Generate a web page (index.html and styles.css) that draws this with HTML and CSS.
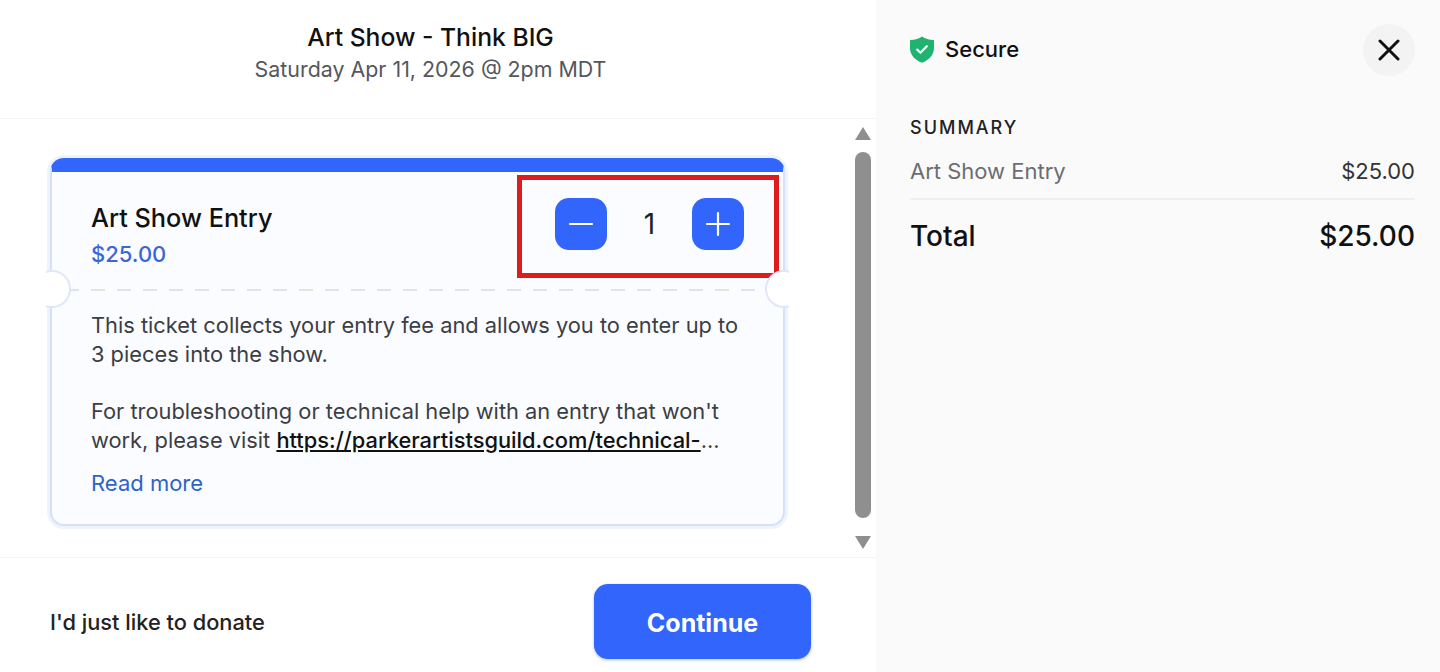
FILE: index.html
```html
<!DOCTYPE html>
<html lang="en">
  <head>
    <meta charset="UTF-8" />
    <meta name="viewport" content="width=device-width, initial-scale=1.0" />
    <title>Checkout</title>
    <link rel="stylesheet" href="styles.css">
  </head>
  <body>
    <div class="checkout">
      <main class="main">
        <header class="event-header">
          <h1>Art Show - Think BIG</h1>
          <p>Saturday Apr 11, 2026 @ 2pm MDT</p>
        </header>

        <section class="tickets">
          <div class="ticket-list">
            <div class="ticket">
              <div class="ticket-top">
                <div>
                  <h2>Art Show Entry</h2>
                  <div class="ticket-price">$25.00</div>
                </div>
                <div class="stepper">
                  <button class="step-btn" aria-label="Decrease">
                    <svg width="26" height="26" viewBox="0 0 26 26"><path d="M2 13h22" stroke="#fff" stroke-width="2.2" stroke-linecap="round"/></svg>
                  </button>
                  <span class="step-count">1</span>
                  <button class="step-btn" aria-label="Increase">
                    <svg width="26" height="26" viewBox="0 0 26 26"><path d="M2 13h22M13 2v22" stroke="#fff" stroke-width="2.2" stroke-linecap="round"/></svg>
                  </button>
                </div>
              </div>
              <div class="ticket-divider"></div>
              <div class="ticket-body">
                <p>This ticket collects your entry fee and allows you to enter up to<br>3 pieces into the show.</p>
                <p>For troubleshooting or technical help with an entry that won't<br>work, please visit <a href="#" class="ticket-link">https://parkerartistsguild.com/technical-</a>...</p>
                <a href="#" class="read-more">Read more</a>
              </div>
              <div class="highlight"></div>
            </div>
          </div>
          <div class="scrollbar">
            <span class="arrow-up"></span>
            <span class="thumb"></span>
            <span class="arrow-down"></span>
          </div>
        </section>

        <footer class="main-footer">
          <a href="#" class="donate">I'd just like to donate</a>
          <button class="continue-btn">Continue</button>
        </footer>
      </main>

      <aside class="sidebar">
        <div class="sidebar-top">
          <div class="secure">
            <svg width="24" height="27" viewBox="0 0 24 27">
              <path d="M12 0.5 C15 2.6 19 3.8 23.2 4 C23.8 4 24 4.4 24 5 L24 12 C24 19 19 24 12 26.8 C5 24 0 19 0 12 L0 5 C0 4.4 .2 4 .8 4 C5 3.8 9 2.6 12 0.5 Z" fill="#1fb36f"/>
              <path d="M7.2 13.6l3.3 3.2 6.3-6.6" fill="none" stroke="#fff" stroke-width="2.2" stroke-linecap="round" stroke-linejoin="round"/>
            </svg>
            <span>Secure</span>
          </div>
          <button class="close-btn" aria-label="Close">
            <svg width="22" height="22" viewBox="0 0 22 22"><path d="M2 2l18 18M20 2L2 20" stroke="#111" stroke-width="3" stroke-linecap="round"/></svg>
          </button>
        </div>

        <h3 class="summary-title">SUMMARY</h3>
        <div class="summary-row">
          <span class="summary-name">Art Show Entry</span>
          <span class="summary-price">$25.00</span>
        </div>
        <div class="summary-total">
          <span>Total</span>
          <span>$25.00</span>
        </div>
      </aside>
    </div>
  </body>
</html>
```

FILE: styles.css
```css
*,
*::before,
*::after {
  box-sizing: border-box;
}

html,
body {
  margin: 0;
  height: 100%;
  overflow: hidden;
}

body {
  font-family: Inter, "Noto Sans", sans-serif;
  color: #111;
  background-color: white;
}

.checkout {
  display: flex;
  height: 672px;
}

.main {
  width: 876px;
  display: flex;
  flex-direction: column;
}

.event-header {
  height: 119px;
  padding: 21px 15px 0 0;
  text-align: center;
  border-bottom: 1px solid #f4f4f4;
}

.event-header h1 {
  margin: 0;
  font-size: 24.7px;
  line-height: 32px;
  font-weight: 500;
}

.event-header p {
  margin: 1px 0 0;
  font-size: 21.4px;
  line-height: 30px;
  color: #55575c;
}

.tickets {
  height: 439px;
  display: flex;
  border-bottom: 1px solid #f4f4f4;
}

.ticket-list {
  width: 855px;
  padding: 39px 0 0 50px;
}

.ticket {
  position: relative;
  width: 735px;
  height: 368px;
  background-color: #fbfcff;
  border: 2px solid #d5e1f6;
  border-top: 14px solid #3265fb;
  border-radius: 14px;
  box-shadow: 0 0 0 3px #eef3fd;
}

.ticket::before,
.ticket::after {
  content: "";
  position: absolute;
  top: 98px;
  width: 38px;
  height: 38px;
  border-radius: 50%;
  background-color: white;
  border: 2px solid #dfe7f8;
}

.ticket::before {
  left: -19px;
  clip-path: inset(-1px -1px -1px 13px);
}

.ticket::after {
  right: -20px;
  clip-path: inset(-1px 14px -1px -1px);
}

.ticket-top {
  height: 117px;
  padding: 30px 39px 0 39px;
  display: flex;
  justify-content: space-between;
  align-items: flex-start;
}

.ticket-top h2 {
  margin: 0;
  font-size: 25.3px;
  line-height: 32px;
  font-weight: 500;
}

.ticket-price {
  margin-top: 5px;
  font-size: 22px;
  line-height: 30px;
  font-weight: 500;
  color: #3b66d8;
}

.stepper {
  display: flex;
  align-items: center;
  margin-top: -4px;
}

.step-btn {
  width: 52px;
  height: 52px;
  padding: 0;
  border: none;
  border-radius: 14px;
  background-color: #3265fb;
  display: flex;
  align-items: center;
  justify-content: center;
  cursor: pointer;
}

.step-count {
  width: 85px;
  text-align: center;
  font-size: 28px;
  color: #222;
}

.ticket-divider {
  height: 2px;
  margin: 0 13px;
  background: repeating-linear-gradient(to right, #e0e3ea 0 14px, transparent 14px 26px);
}

.ticket-body {
  padding: 20px 39px 0;
}

.ticket-body p {
  margin: 0 0 28px;
  font-size: 21.84px;
  line-height: 29px;
  color: #3b3e44;
}

.ticket-link {
  color: #111;
  font-weight: 500;
}

.read-more {
  display: block;
  margin-top: -15px;
  font-size: 22px;
  line-height: 30px;
  color: #2e63c9;
  text-decoration: none;
}

.highlight {
  position: absolute;
  left: 465px;
  top: 3px;
  width: 262px;
  height: 103px;
  border: 5px solid #dd1c1c;
}

.scrollbar {
  width: 16px;
  display: flex;
  flex-direction: column;
  align-items: center;
  padding-top: 8px;
}

.arrow-up {
  width: 0;
  height: 0;
  border-left: 8px solid transparent;
  border-right: 8px solid transparent;
  border-bottom: 13px solid #8f8f8f;
}

.thumb {
  width: 16px;
  height: 366px;
  margin: 12px 0 18px;
  border-radius: 8px;
  background-color: #8f8f8f;
}

.arrow-down {
  width: 0;
  height: 0;
  border-left: 8px solid transparent;
  border-right: 8px solid transparent;
  border-top: 13px solid #8f8f8f;
}

.main-footer {
  flex: 1;
  display: flex;
  align-items: center;
  justify-content: space-between;
  padding: 12px 65px 0 50px;
}

.donate {
  font-size: 21.8px;
  font-weight: 500;
  color: #222;
  text-decoration: none;
  margin-top: 2px;
}

.continue-btn {
  width: 217px;
  height: 75px;
  padding-top: 4px;
  border: none;
  border-radius: 14px;
  background-color: #3265fb;
  box-shadow: 0 1px 3px rgba(50, 101, 251, 0.4);
  color: white;
  font-family: inherit;
  font-size: 25px;
  font-weight: 700;
  cursor: pointer;
}

.sidebar {
  flex: 1;
  padding: 24px 25px 0 34px;
  background-color: #fafafa;
}

.sidebar-top {
  display: flex;
  justify-content: space-between;
  align-items: center;
}

.secure {
  display: flex;
  align-items: center;
  gap: 11px;
  margin-top: -2px;
  font-size: 22px;
  font-weight: 500;
}

.close-btn {
  width: 52px;
  height: 52px;
  padding: 0;
  border: none;
  border-radius: 50%;
  background-color: #f3f3f3;
  display: flex;
  align-items: center;
  justify-content: center;
  cursor: pointer;
}

.summary-title {
  margin: 39px 0 0;
  font-size: 18px;
  line-height: 26px;
  font-weight: 500;
  letter-spacing: 2px;
  color: #222;
}

.summary-row {
  display: flex;
  justify-content: space-between;
  align-items: center;
  height: 59px;
  padding-top: 3px;
  border-bottom: 2px solid #efefef;
  font-size: 22px;
}

.summary-name {
  color: #6b6d72;
}

.summary-price {
  color: #333;
}

.summary-total {
  display: flex;
  justify-content: space-between;
  margin-top: 18px;
  font-size: 28px;
  line-height: 36px;
  font-weight: 500;
}
```
